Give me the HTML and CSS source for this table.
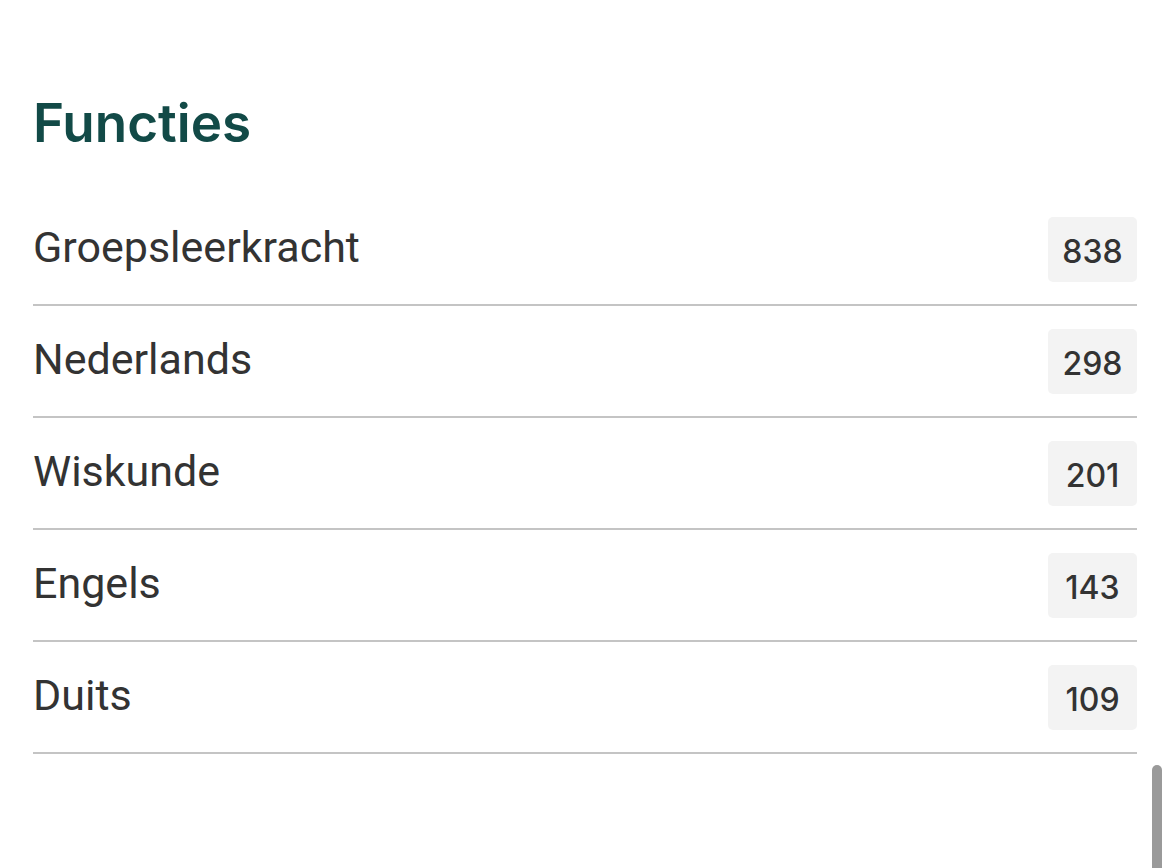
FILE: index.html
```html
<!DOCTYPE html>
<html lang="nl">
<head>
<meta charset="utf-8">
<link rel="stylesheet" href="styles.css">
</head>
<body>
<main class="page">
  <h2 class="title">Functies</h2>
  <ul class="list">
    <li class="row"><span class="label">Groepsleerkracht</span><span class="count">838</span></li>
    <li class="row"><span class="label">Nederlands</span><span class="count">298</span></li>
    <li class="row"><span class="label">Wiskunde</span><span class="count">201</span></li>
    <li class="row"><span class="label">Engels</span><span class="count">143</span></li>
    <li class="row"><span class="label">Duits</span><span class="count">109</span></li>
  </ul>
</main>
<div class="scrollbar"></div>
</body>
</html>
```
FILE: styles.css
```css
html, body {
  margin: 0;
  padding: 0;
  background: #ffffff;
  height: 100%;
  overflow: hidden;
}
.page {
  padding: 0 33px;
  font-family: Roboto, "Liberation Sans", sans-serif;
  color: #333333;
}
.title {
  margin: 0 0 39px;
  padding-top: 91px;
  font-family: Inter, Roboto, sans-serif;
  font-weight: 600;
  font-size: 53px;
  line-height: 64px;
  color: #124a47;
}
.list {
  list-style: none;
  margin: 0;
  padding: 0;
}
.row {
  display: flex;
  align-items: center;
  justify-content: space-between;
  height: 110px;
  border-bottom: 2px solid #c4c4c4;
}
.label {
  font-size: 43px;
  line-height: 48px;
  margin-top: -5px;
}
.count {
  display: flex;
  align-items: center;
  justify-content: center;
  width: 89px;
  height: 65px;
  background: #f3f3f3;
  border-radius: 5px;
  font-family: Inter, Roboto, sans-serif;
  font-weight: 500;
  font-size: 32px;
  padding-top: 5px;
  box-sizing: border-box;
  color: #333333;
}
.scrollbar {
  position: absolute;
  left: 1152px;
  top: 765px;
  width: 10px;
  height: 120px;
  background: #9a9a9a;
  border-radius: 5px;
}
```
